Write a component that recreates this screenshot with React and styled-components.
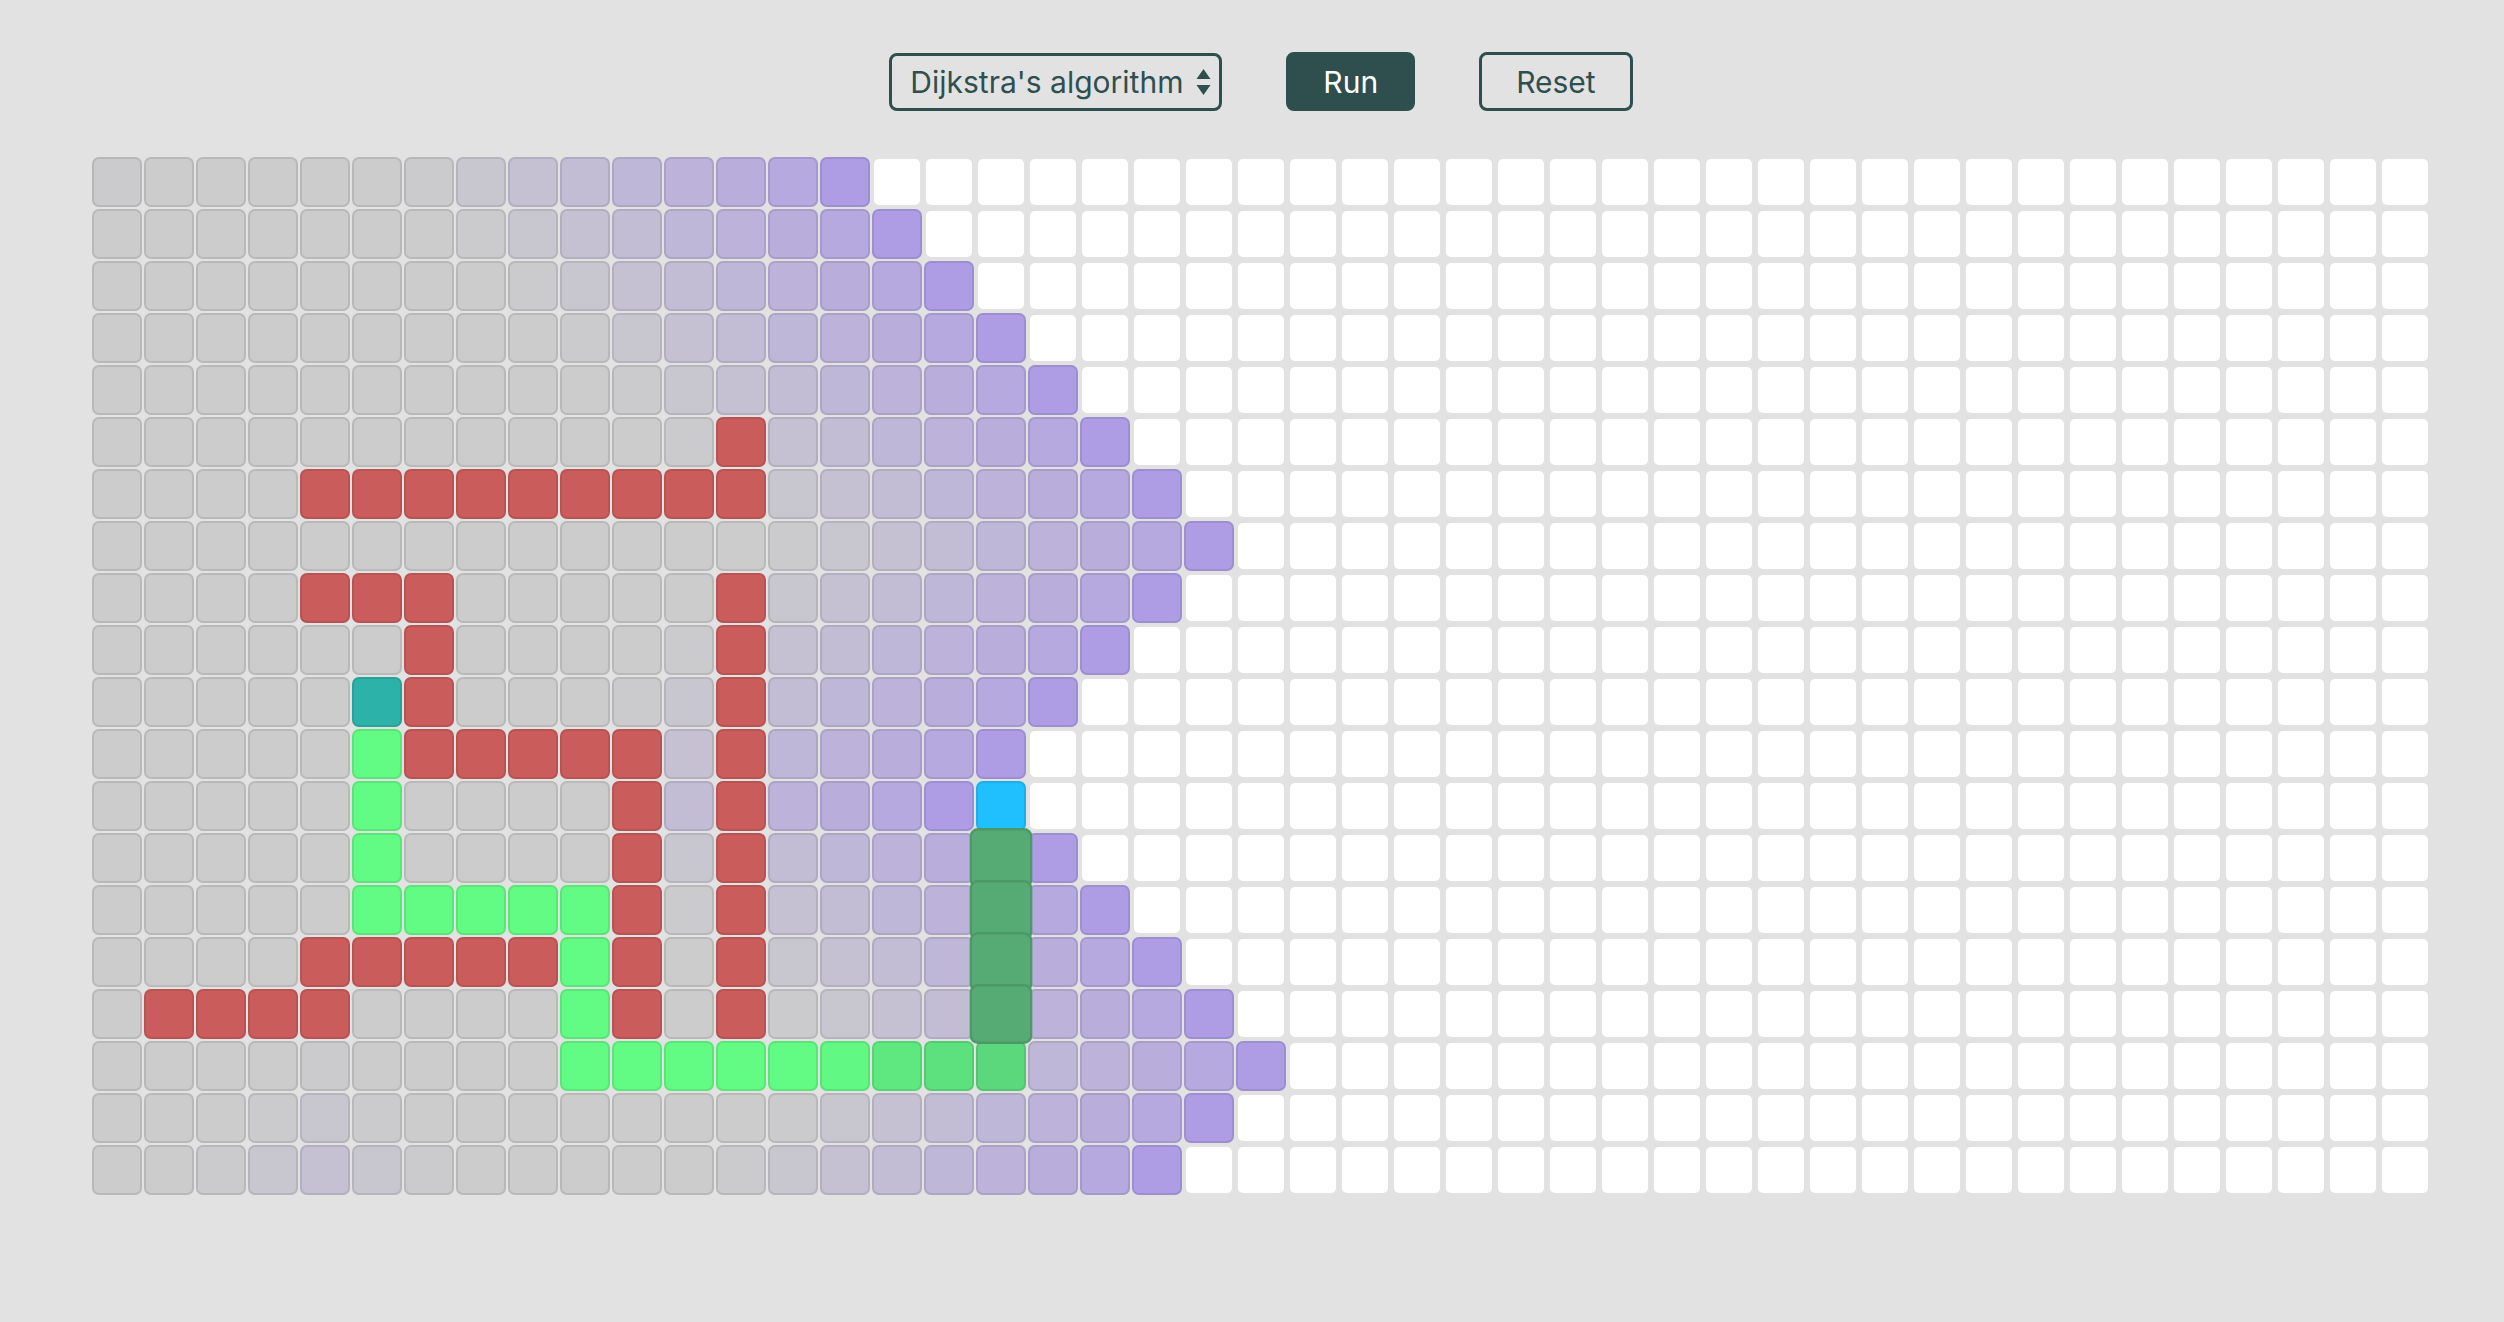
import React, { useMemo } from "react";
import styled, { createGlobalStyle, css } from "styled-components";

const ROWS = 20;
const COLS = 45;
const START = [10, 5];
const END = [12, 17];
const WALLS = {
  5: [12],
  6: [4, 5, 6, 7, 8, 9, 10, 11, 12],
  8: [4, 5, 6, 12],
  9: [6, 12],
  10: [6, 12],
  11: [6, 7, 8, 9, 10, 12],
  12: [10, 12],
  13: [10, 12],
  14: [10, 12],
  15: [4, 5, 6, 7, 8, 10, 12],
  16: [1, 2, 3, 4, 10, 12],
};
const PATH = [
  [11, 5], [12, 5], [13, 5], [14, 5], [14, 6], [14, 7], [14, 8], [14, 9],
  [15, 9], [16, 9], [17, 9], [17, 10], [17, 11], [17, 12], [17, 13],
  [17, 14], [17, 15], [17, 16], [17, 17],
  [16, 17], [15, 17], [14, 17], [13, 17],
];
// fade toward darker green for the last settled path cells
const PATH_FADE = { "17,14": 0.05, "17,15": 0.25, "17,16": 0.35, "17,17": 0.45 };
const GROWING = new Set(["16,17", "15,17", "14,17", "13,17"]);

const GRAY = [204, 204, 204];
const PURPLE = [174, 157, 229];
const GREEN = [98, 252, 132];
const DARK_GREEN = [85, 171, 115];

const mix = (a, b, t) =>
  `rgb(${a.map((v, i) => Math.round(v + (b[i] - v) * t)).join(",")})`;

function buildBoard() {
  const wall = Array.from({ length: ROWS }, (_, r) =>
    Array.from({ length: COLS }, (_, c) => (WALLS[r] || []).includes(c))
  );
  const dist = Array.from({ length: ROWS }, () => Array(COLS).fill(Infinity));
  const q = [START];
  dist[START[0]][START[1]] = 0;
  while (q.length) {
    const [r, c] = q.shift();
    for (const [dr, dc] of [[1, 0], [-1, 0], [0, 1], [0, -1]]) {
      const nr = r + dr;
      const nc = c + dc;
      if (nr < 0 || nc < 0 || nr >= ROWS || nc >= COLS) continue;
      if (wall[nr][nc] || dist[nr][nc] !== Infinity) continue;
      dist[nr][nc] = dist[r][c] + 1;
      q.push([nr, nc]);
    }
  }
  const pathSet = new Set(PATH.map(([r, c]) => `${r},${c}`));
  const cells = [];
  for (let r = 0; r < ROWS; r++) {
    for (let c = 0; c < COLS; c++) {
      const key = `${r},${c}`;
      let kind = "empty";
      let color;
      if (r === START[0] && c === START[1]) kind = "start";
      else if (r === END[0] && c === END[1]) kind = "end";
      else if (wall[r][c]) kind = "wall";
      else if (GROWING.has(key)) kind = "growing";
      else if (pathSet.has(key)) {
        kind = "path";
        if (PATH_FADE[key]) color = mix(GREEN, DARK_GREEN, PATH_FADE[key]);
      } else {
        const d = dist[r][c];
        const lower = r >= 13;
        const visited = d <= 23 || (lower && d === 24);
        if (visited) {
          kind = "visited";
          const age = (lower ? 24 : 23) - d;
          const f = age <= 0 ? 1 : Math.max(0, 0.86 - 0.105 * age);
          color = mix(GRAY, PURPLE, f);
        }
      }
      cells.push({ key, kind, color });
    }
  }
  return cells;
}

const GlobalStyle = createGlobalStyle`
  html, body {
    margin: 0;
    padding: 0;
    background: #e2e2e2;
  }
  body {
    font-family: Inter, "Liberation Sans", Arial, sans-serif;
  }
`;

const Page = styled.main`
  box-sizing: border-box;
  min-height: 100vh;
  padding: 52px 0 0 18px;
  display: flex;
  flex-direction: column;
  align-items: center;
  gap: 46px;
`;

const Toolbar = styled.div`
  display: flex;
  align-items: center;
  gap: 64px;
`;

const SelectWrap = styled.div`
  position: relative;
  display: flex;
`;

const Select = styled.select`
  appearance: none;
  -webkit-appearance: none;
  box-sizing: border-box;
  width: 333px;
  height: 58px;
  margin: 0;
  padding: 0 20px 0 18px;
  border: 3px solid #2f4f4f;
  border-radius: 8px;
  background: transparent;
  color: #2f4f4f;
  font-family: Inter, "Liberation Sans", sans-serif;
  font-size: 30px;
  outline: none;
`;

const Arrows = styled.svg`
  position: absolute;
  right: 11px;
  top: 50%;
  transform: translateY(-50%);
  pointer-events: none;
`;

const Button = styled.button`
  box-sizing: border-box;
  height: 59px;
  padding: 0 34px;
  border: 3px solid #2f4f4f;
  border-radius: 8px;
  font-family: Inter, "Liberation Sans", sans-serif;
  font-size: 30px;
  cursor: pointer;
  ${({ $primary }) =>
    $primary
      ? css`
          background: #2f4f4f;
          color: #ffffff;
        `
      : css`
          background: transparent;
          color: #2f4f4f;
        `}
`;

const Board = styled.div`
  display: grid;
  grid-template-columns: repeat(${COLS}, 50px);
  grid-auto-rows: 50px;
  gap: 2px;
`;

const kindStyles = {
  empty: css`
    background: #ffffff;
    border-color: #e2e2e2;
  `,
  visited: css`
    background: #cccccc;
  `,
  wall: css`
    background: #cb5c5c;
  `,
  start: css`
    background: #2cb2a8;
  `,
  end: css`
    background: #1fc0fd;
  `,
  path: css`
    background: #62fc84;
  `,
  growing: css`
    background: #55ab73;
    border-color: rgba(0, 0, 0, 0.1);
    transform: scale(1.26, 1.2);
    z-index: 1;
  `,
};

const Cell = styled.div`
  box-sizing: border-box;
  border: 2px solid rgba(0, 0, 0, 0.09);
  border-radius: 7px;
  ${({ $kind }) => kindStyles[$kind]}
`;

export default function App() {
  const cells = useMemo(buildBoard, []);
  return (
    <>
      <GlobalStyle />
      <Page>
        <Toolbar>
          <SelectWrap>
            <Select defaultValue="dijkstra">
              <option value="dijkstra">Dijkstra's algorithm</option>
              <option value="astar">A* search</option>
              <option value="bfs">Breadth-first search</option>
              <option value="dfs">Depth-first search</option>
            </Select>
            <Arrows width="15" height="26" viewBox="0 0 15 26">
              <path d="M7.5 0 L14.5 10 L0.5 10 Z" fill="#2f4f4f" />
              <path d="M7.5 26 L14.5 16 L0.5 16 Z" fill="#2f4f4f" />
            </Arrows>
          </SelectWrap>
          <Button $primary>Run</Button>
          <Button>Reset</Button>
        </Toolbar>
        <Board>
          {cells.map((cell) => (
            <Cell
              key={cell.key}
              $kind={cell.kind}
              style={cell.color ? { background: cell.color } : undefined}
            />
          ))}
        </Board>
      </Page>
    </>
  );
}
